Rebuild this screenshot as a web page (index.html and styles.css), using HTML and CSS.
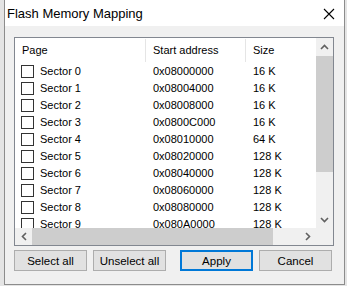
FILE: index.html
```html
<!DOCTYPE html>
<html>
<head>
  <title>Flash Memory Mapping</title>
  <link rel="stylesheet" href="styles.css">
</head>
<body>
  <div class="dialog">
    <div class="titlebar">
      <span class="title">Flash Memory Mapping</span>
      <svg class="close" width="12" height="12" viewBox="0 0 12 12">
        <path d="M1 1 L11 11 M11 1 L1 11" stroke="#000" stroke-width="1.1" fill="none"/>
      </svg>
    </div>

    <div class="content">
      <div class="listbox">
        <div class="view">
          <div class="header">
            <div class="col page">Page</div>
            <div class="col addr">Start address</div>
            <div class="col size">Size</div>
          </div>
          <div class="row"><div class="col page"><span class="check"></span>Sector 0</div><div class="col addr">0x08000000</div><div class="col size">16 K</div></div>
          <div class="row"><div class="col page"><span class="check"></span>Sector 1</div><div class="col addr">0x08004000</div><div class="col size">16 K</div></div>
          <div class="row"><div class="col page"><span class="check"></span>Sector 2</div><div class="col addr">0x08008000</div><div class="col size">16 K</div></div>
          <div class="row"><div class="col page"><span class="check"></span>Sector 3</div><div class="col addr">0x0800C000</div><div class="col size">16 K</div></div>
          <div class="row"><div class="col page"><span class="check"></span>Sector 4</div><div class="col addr">0x08010000</div><div class="col size">64 K</div></div>
          <div class="row"><div class="col page"><span class="check"></span>Sector 5</div><div class="col addr">0x08020000</div><div class="col size">128 K</div></div>
          <div class="row"><div class="col page"><span class="check"></span>Sector 6</div><div class="col addr">0x08040000</div><div class="col size">128 K</div></div>
          <div class="row"><div class="col page"><span class="check"></span>Sector 7</div><div class="col addr">0x08060000</div><div class="col size">128 K</div></div>
          <div class="row"><div class="col page"><span class="check"></span>Sector 8</div><div class="col addr">0x08080000</div><div class="col size">128 K</div></div>
          <div class="row"><div class="col page"><span class="check"></span>Sector 9</div><div class="col addr">0x080A0000</div><div class="col size">128 K</div></div>
        </div>

        <div class="vscroll">
          <div class="arrow">
            <svg width="9" height="6" viewBox="0 0 9 6"><path d="M1 5 L4.5 1.5 L8 5" stroke="#606060" stroke-width="1.6" fill="none"/></svg>
          </div>
          <div class="thumb-v"></div>
          <div class="track"></div>
          <div class="arrow">
            <svg width="9" height="6" viewBox="0 0 9 6"><path d="M1 1 L4.5 4.5 L8 1" stroke="#606060" stroke-width="1.6" fill="none"/></svg>
          </div>
        </div>

        <div class="hscroll">
          <div class="arrow">
            <svg width="6" height="9" viewBox="0 0 6 9"><path d="M5 1 L1.5 4.5 L5 8" stroke="#606060" stroke-width="1.6" fill="none"/></svg>
          </div>
          <div class="thumb-h"></div>
          <div class="track"></div>
          <div class="arrow">
            <svg width="6" height="9" viewBox="0 0 6 9"><path d="M1 1 L4.5 4.5 L1 8" stroke="#606060" stroke-width="1.6" fill="none"/></svg>
          </div>
        </div>

        <div class="corner"></div>
      </div>

      <div class="buttons">
        <button>Select all</button>
        <button>Unselect all</button>
        <button class="default gap">Apply</button>
        <button>Cancel</button>
      </div>
    </div>
  </div>
</body>
</html>
```

FILE: styles.css
```css
body {
  margin: 0;
  background: #e4e4e4;
  font-family: "Liberation Sans", Arial, sans-serif;
  font-size: 11px;
  color: #000;
}
.dialog {
  margin-left: 4px;
  width: 339px;
  height: 284px;
  background: #f0f0f0;
  border: 1px solid #8c8c8c;
  border-top: none;
}
.titlebar {
  height: 26px;
  background: #fff;
  display: flex;
  align-items: center;
  justify-content: space-between;
  padding: 0 9px 0 2px;
}
.title {
  font-size: 13px;
  padding-top: 1px;
}
.close {
  margin-top: 1px;
}
.content {
  padding: 11px 10px 0 9px;
}
.listbox {
  height: 207px;
  background: #fff;
  border: 1px solid #828790;
  display: grid;
  grid-template-columns: 1fr 17px;
  grid-template-rows: 1fr 17px;
}
.view {
  overflow: hidden;
}
.header, .row {
  display: flex;
  white-space: nowrap;
}
.header {
  height: 25px;
  align-items: center;
}
.header .col {
  height: 23px;
  line-height: 23px;
  border-right: 1px solid #e5e5e5;
}
.header .size {
  border-right: none;
}
.row {
  height: 17px;
  line-height: 17px;
}
.col {
  padding-left: 7px;
  box-sizing: border-box;
}
.page {
  width: 131px;
}
.addr {
  width: 100px;
}
.size {
  width: 70px;
}
.row .page {
  padding-left: 6px;
  display: flex;
  align-items: center;
}
.check {
  width: 11px;
  height: 11px;
  border: 1px solid #333;
  background: #fff;
  margin-right: 6px;
}
.vscroll, .hscroll {
  background: #f0f0f0;
  display: flex;
}
.vscroll {
  flex-direction: column;
}
.arrow {
  width: 17px;
  height: 17px;
  flex: none;
  display: flex;
  align-items: center;
  justify-content: center;
}
.track {
  flex: 1;
}
.thumb-v {
  height: 116px;
  margin-top: 1px;
  background: #cdcdcd;
}
.thumb-h {
  width: 241px;
  background: #cdcdcd;
}
.corner {
  background: #f0f0f0;
}
.buttons {
  display: flex;
  margin-top: 4px;
}
button {
  width: 73px;
  height: 21px;
  margin-right: 6px;
  padding: 0;
  background: #e1e1e1;
  border: 1px solid #adadad;
  font-family: "Liberation Sans", Arial, sans-serif;
  font-size: 11.5px;
  color: #000;
}
button:last-child {
  margin-right: 0;
}
.gap {
  margin-left: 8px;
}
.default {
  border: 2px solid #0078d7;
}
```
